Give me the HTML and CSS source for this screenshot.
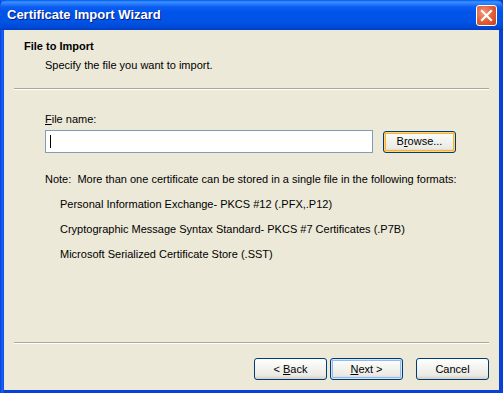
FILE: index.html
```html
<!DOCTYPE html>
<html>
<head>
<meta charset="utf-8">
<link rel="stylesheet" href="styles.css">
</head>
<body>
<div class="window">
  <div class="titlebar">
    <span class="title">Certificate Import Wizard</span>
    <span class="close"><svg width="13" height="13" viewBox="0 0 13 13"><path d="M2 2 L11 11 M11 2 L2 11" stroke="#fff" stroke-width="2.2" stroke-linecap="square"/></svg></span>
  </div>
  <div class="client">
    <div class="header">
      <div class="h-title">File to Import</div>
      <div class="h-sub">Specify the file you want to import.</div>
    </div>
    <div class="sep top-sep"></div>
    <div class="main">
      <div class="label"><u>F</u>ile name:</div>
      <div class="file-row">
        <div class="input"><span class="caret"></span></div>
        <div class="btn focus">B<u>r</u>owse...</div>
      </div>
      <div class="note">Note:&nbsp; More than one certificate can be stored in a single file in the following formats:</div>
      <div class="formats">
        <div>Personal Information Exchange- PKCS #12 (.PFX,.P12)</div>
        <div>Cryptographic Message Syntax Standard- PKCS #7 Certificates (.P7B)</div>
        <div>Microsoft Serialized Certificate Store (.SST)</div>
      </div>
    </div>
    <div class="sep bottom-sep"></div>
    <div class="buttons">
      <div class="btn">&lt;&nbsp;<u>B</u>ack</div>
      <div class="btn default"><u>N</u>ext &gt;</div>
      <div class="btn cancel">Cancel</div>
    </div>
  </div>
</div>
</body>
</html>
```

FILE: styles.css
```css
html, body {
  margin: 0;
  padding: 0;
  width: 503px;
  height: 393px;
  overflow: hidden;
  background: #0831d9;
}
.window {
  width: 503px;
  height: 393px;
  display: flex;
  flex-direction: column;
  background: linear-gradient(to right, #0a3fd8 0, #1660f4 2px, #1660f4 3px, #0a3fd8 4px);
  font-family: "Liberation Sans", Arial, sans-serif;
  font-size: 11px;
  color: #000;
}
.titlebar {
  height: 30px;
  flex: none;
  display: flex;
  align-items: center;
  justify-content: space-between;
  padding: 0 6px 0 7px;
  border-radius: 7px 7px 0 0;
  background: linear-gradient(to bottom, #0058ee 0, #3a93ff 2px, #2b7bf8 4px, #0a5ef4 7px, #0054e9 12px, #0053e5 22px, #0049d6 27px, #003ec2 30px);
}
.title {
  color: #fff;
  font-weight: bold;
  font-size: 13px;
  text-shadow: 1px 1px 0 #0a1e7a;
  padding-bottom: 1px;
}
.close {
  width: 19px;
  height: 19px;
  border: 1px solid #fff;
  border-radius: 3px;
  background: radial-gradient(circle at 35% 35%, #f2987c 0, #e1603a 50%, #c8401a 100%);
  display: flex;
  align-items: center;
  justify-content: center;
  margin-top: 1px;
}
.client {
  flex: 1;
  margin: 0 4px 3px 4px;
  background: #ece9d8;
  display: flex;
  flex-direction: column;
}
.header {
  padding: 10px 0 0 20px;
  height: 48px;
  box-sizing: border-box;
}
.h-title {
  font-weight: bold;
  line-height: 13px;
}
.h-sub {
  margin-top: 6px;
  padding-left: 21px;
  line-height: 13px;
}
.sep {
  border-top: 1px solid #aca899;
  border-bottom: 1px solid #fff;
  height: 0;
  margin-left: 10px;
  margin-right: 10px;
}
.top-sep {
  margin-top: 10px;
}
.main {
  padding: 23px 0 0 41px;
  flex: 1;
}
.label {
  line-height: 13px;
}
.label u, .btn u {
  text-decoration-thickness: 1px;
  text-underline-offset: 1px;
}
.file-row {
  display: flex;
  align-items: center;
  margin-top: 4px;
}
.input {
  width: 322px;
  height: 21px;
  border: 1px solid #7f9db9;
  background: #fff;
  display: flex;
  align-items: center;
  padding-left: 4px;
  box-sizing: content-box;
}
.caret {
  width: 1px;
  height: 13px;
  background: #000;
}
.btn {
  width: 71px;
  height: 20px;
  border: 1px solid #003c74;
  border-radius: 3px;
  background: linear-gradient(to bottom, #ffffff 0, #f4f4f0 40%, #ecebe6 80%, #d6d0c5 100%);
  display: flex;
  align-items: center;
  justify-content: center;
  line-height: 13px;
  box-sizing: content-box;
}
.file-row .btn {
  margin-left: 10px;
}
.btn.focus {
  box-shadow: inset 0 0 0 1px #ffd580, inset 0 0 0 2px #f8b330;
}
.btn.default {
  box-shadow: inset 0 0 0 1px #cee7ff, inset 0 0 0 2px #98b8ea;
}
.note {
  margin-top: 20px;
  line-height: 13px;
}
.formats {
  padding-left: 15px;
  display: flex;
  flex-direction: column;
  gap: 12px;
  margin-top: 12px;
  line-height: 13px;
}
.buttons {
  display: flex;
  justify-content: flex-end;
  padding: 14px 10px 0 0;
  height: 46px;
  box-sizing: border-box;
  gap: 3px;
}
.buttons .cancel {
  margin-left: 10px;
}
```
